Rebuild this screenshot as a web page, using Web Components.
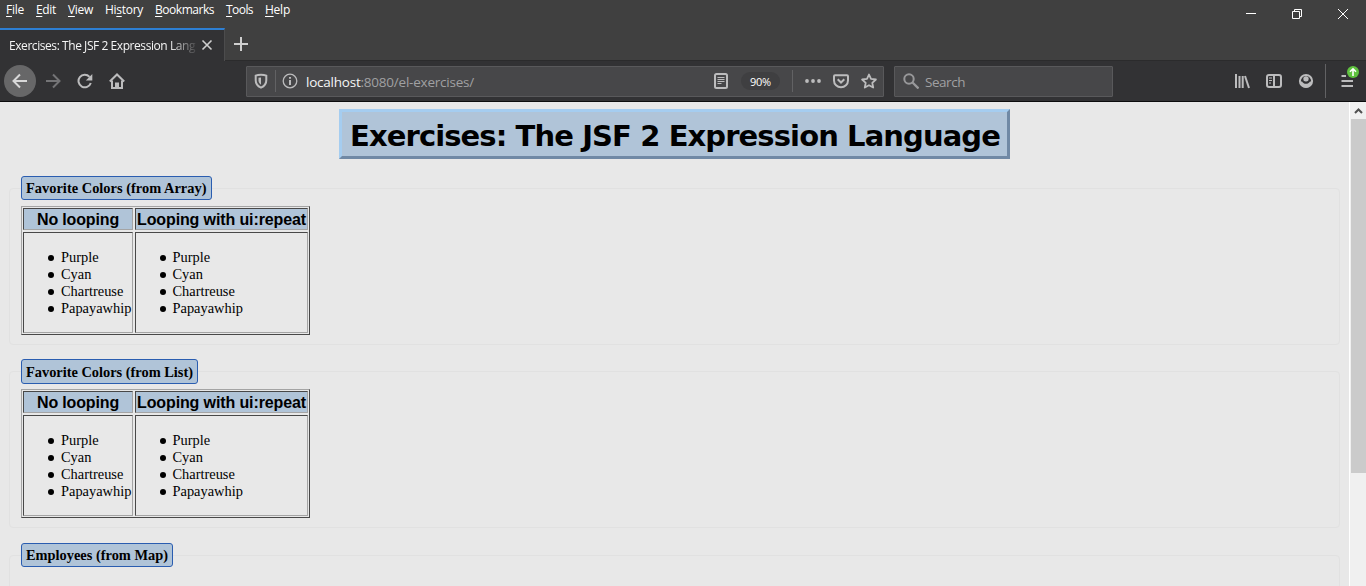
<!DOCTYPE html>
<html lang="en"><head><meta charset="utf-8"><title>Exercises: The JSF 2 Expression Language</title>
<style>html,body{margin:0;height:100%;overflow:hidden;background:#e8e8e8}</style></head>
<body><browser-window></browser-window>
<script>
function define(name, html, setup){
  customElements.define(name, class extends HTMLElement{
    connectedCallback(){
      if(this.shadowRoot) return;
      this.attachShadow({mode:'open'}).innerHTML = html;
      if(setup) setup(this, this.shadowRoot);
    }
  });
}
// Text run whose tracking is adjusted to occupy a given width.
define('fit-text', '<style>:host{display:block;white-space:pre;flex:none}span{display:inline-block}</style><span><slot></slot></span>', (el, r)=>{
  const w = +el.getAttribute('w'), s = r.querySelector('span');
  const d = w - s.getBoundingClientRect().width;
  s.style.letterSpacing = (d / el.textContent.length) + 'px';
  el.style.width = w + 'px';
});
define('menu-bar', `<style>
:host{display:block;height:28px;font:12px/20px "Open Sans","Noto Sans",sans-serif;color:#fff}
nav{display:grid;grid-template-columns:30px 32px 37px 50px 71px 39px 40px;padding-left:6px}
u{text-underline-offset:2px;text-decoration-thickness:1px}
</style><nav><fit-text w="18"><u>F</u>ile</fit-text><fit-text w="20"><u>E</u>dit</fit-text><fit-text w="25"><u>V</u>iew</fit-text><fit-text w="38">Hi<u>s</u>tory</fit-text><fit-text w="59"><u>B</u>ookmarks</fit-text><fit-text w="27"><u>T</u>ools</fit-text><fit-text w="25"><u>H</u>elp</fit-text></nav>`);
define('window-controls', `<style>:host{display:flex;height:28px;justify-content:space-between;width:104px;margin-right:17px}svg{width:12px;height:28px;fill:none;stroke:#fff;stroke-width:1}</style>
<svg viewBox="0 0 12 28"><path d="M1 13.5h10"/></svg><svg viewBox="0 0 12 28"><path d="M1.5 11.5h7v7h-7zM3.5 11v-1.5h7v7H9"/></svg><svg viewBox="0 0 12 28"><path d="M1 9l10 10M11 9L1 19"/></svg>`);
define('tab-strip', `<style>
:host{display:flex;height:33px;box-sizing:border-box;border-bottom:1px solid #2b2b2c}
.tab{width:225px;height:33px;box-sizing:border-box;border-top:2px solid #2d7fd3;border-right:1px solid #4c4c4d;background:#323234;display:flex;align-items:center;padding-left:9px;color:#f5f5f5;font:12px/20px "Open Sans","Noto Sans",sans-serif;padding-bottom:1px}
.t{width:187px;height:20px;margin-top:2px;-webkit-mask-image:linear-gradient(90deg,#000 160px,transparent 190px);mask-image:linear-gradient(90deg,#000 160px,transparent 190px)}
svg{fill:none;stroke:#cfcfcf;stroke-width:1.6}
.x{width:12px;height:12px;margin-left:5px}.p{width:16px;height:16px;margin:8px 0 0 8px;stroke-width:2}
</style><div class="tab"><div class="t"><fit-text w="186">Exercises: The JSF 2 Expression Lang</fit-text></div><svg class="x" viewBox="0 0 12 12"><path d="M1.5 1.5l9 9M10.5 1.5l-9 9"/></svg></div><svg class="p" viewBox="0 0 16 16"><path d="M8 1v14M1 8h14"/></svg>`);
const ICONS = {
 back:'<path d="M15 8H1.500M8 1.500L1.500 8 8 14.500"/>',
 forward:'<path d="M1 8h13.500M8 1.500L14.500 8 8 14.500"/>',
 reload:'<path d="M13.800 10A6.300 6.300 0 1 1 12.500 3.800"/><path d="M15.300 1v6.500H8.800z" fill="currentColor" stroke="none"/>',
 home:'<path d="M.800 8.500L8 1.500l7.200 7"/><path d="M3 7.500V15h10V7.500"/><path d="M7 14.500v-4h2v4"/>',
 shield:'<path d="M8 1.700c2 0 4 .4 5.300 1v4.500c0 3.600-2 6-5.300 7.500-3.300-1.500-5.300-3.900-5.300-7.500V2.700C4 2.100 6 1.700 8 1.700z"/><path d="M8 4.500v7.200C6.300 10.500 5.500 9 5.500 7.200V4.800z" fill="currentColor" stroke="none"/>',
 info:'<circle cx="8" cy="8" r="6.800" stroke-width="1.300"/><path d="M8 7v5M8 4v1.800"/>',
 reader:'<rect x="2" y="1" width="12" height="14" rx="1.500"/><path d="M4.500 4.500h7M4.500 6.500h7M4.500 8.500h7M4.500 10.500h4" stroke-width="1"/>',
 dots:'<g fill="currentColor" stroke="none"><circle cx="2" cy="8" r="1.900"/><circle cx="8" cy="8" r="1.900"/><circle cx="14" cy="8" r="1.900"/></g>',
 pocket:'<path d="M2 2.300h12q1 0 1 1V7.500a7 6.800 0 0 1-14 0V3.300q0-1 1-1z"/><path d="M4.700 6.300L8 9.500l3.300-3.200"/>',
 star:'<path d="M8 1.500l2 4.400 4.900.6-3.600 3.300.9 4.700L8 12.200l-4.200 2.300.9-4.700L1.100 6.500 6 5.900z" stroke-linejoin="round" stroke-width="1.800"/>',
 search:'<circle cx="6" cy="6" r="4.700"/><path d="M9.500 9.500l6 6" stroke-width="2.300"/>',
 library:'<path d="M2 1v14M5.500 3v12M8.700 3v12"/><path d="M11 3l4 12"/>',
 sidebar:'<rect x="1" y="2" width="14" height="12" rx="2"/><path d="M8 2v12"/><path d="M3 5h3M3 7.500h3M3 10h2" stroke-width="1.200"/>',
 account:'<circle cx="8" cy="8" r="6.100"/><path d="M8 3.200a2.700 2.700 0 1 0 .01 0z" fill="currentColor" stroke="none"/><path d="M2 8.500h2c1 1.800 2.300 2.300 4 2.300s3-.5 4-2.300h2c-.5 4-3 6-6 6s-5.500-2-6-6z" fill="currentColor" stroke="none"/>',
 menu:'<path d="M2.500 3h4.500M2.500 8h11.500M2.500 13h11.500"/>'
};
define('tool-icon', '<style>:host{display:block;width:16px;height:16px;flex:none;color:#bcbcbd}svg{display:block;width:100%;height:100%;fill:none;stroke:currentColor;stroke-width:2}</style>', (el,r)=>{
  r.innerHTML += '<svg viewBox="0 0 16 16">'+ICONS[el.getAttribute('name')]+'</svg>';
});
define('nav-bar', `<style>
:host{display:flex;height:41px;box-sizing:border-box;background:#323234;border-bottom:1px solid #0c0c0d;align-items:center;font:13.500px/20px "Open Sans","Noto Sans",sans-serif;color:#a0a0a2}
.back{width:32px;height:32px;border-radius:50%;background:#676768;display:grid;place-items:center;margin-left:4px}
.back tool-icon{color:#d8d8d8}
.box{box-sizing:border-box;height:31px;background:#474749;border:1px solid #59595b;display:flex;align-items:center;border-radius:1px}
.url{width:638px;margin-left:121px;padding-left:6px}.search{width:219px;margin-left:10px;padding-left:8px}
.sep{width:1px;height:22px;background:#626264}
b{font-weight:400;color:#f5f5f6}
.zoom{width:39px;height:18px;border-radius:9px;background:#3f3f41;color:#fff;font-size:11px;line-height:19px;display:flex;justify-content:center}
.menu{position:relative}.badge{position:absolute;left:8px;top:-7px;width:12px;height:12px}
</style>
<div class="back"><tool-icon name="back"></tool-icon></div>
<tool-icon name="forward" style="margin-left:9px;color:#747476"></tool-icon><tool-icon name="reload" style="margin-left:16px"></tool-icon><tool-icon name="home" style="margin-left:16px"></tool-icon>
<div class="box url"><tool-icon name="shield"></tool-icon><i class="sep" style="margin:0 6px"></i><tool-icon name="info"></tool-icon>
<fit-text w="168" style="margin:2px 239px 0 8px"><b>localhost</b>:8080/el-exercises/</fit-text>
<tool-icon name="reader"></tool-icon><div class="zoom" style="margin-left:12px"><fit-text w="21">90%</fit-text></div><i class="sep" style="margin:0 12px"></i><tool-icon name="dots"></tool-icon><tool-icon name="pocket" style="margin-left:12px"></tool-icon><tool-icon name="star" style="margin-left:12px"></tool-icon></div>
<div class="box search"><tool-icon name="search" style="color:#98989a"></tool-icon><fit-text w="40" style="margin:2px 0 0 6px">Search</fit-text></div>
<tool-icon name="library" style="margin-left:121px"></tool-icon><tool-icon name="sidebar" style="margin-left:16px"></tool-icon><tool-icon name="account" style="margin-left:16px"></tool-icon><i class="sep" style="height:34px;margin:0 13px 0 11px"></i>
<div class="menu"><tool-icon name="menu"></tool-icon><svg class="badge" viewBox="0 0 12 12"><circle cx="6" cy="6" r="6" fill="#5fc23f"/><path d="M6 10V3M3 5.800L6 2.800l3 3" fill="none" stroke="#fff" stroke-width="1.600"/></svg></div>`);
define('page-scrollbar', `<style>:host{display:flex;flex-direction:column;width:17px;box-sizing:border-box;background:#f0f0f0;border-left:1px solid #fff;align-items:center}svg{width:9px;height:17px;flex:none}div{width:15px;height:354px;background:#cbcbcb}</style><svg viewBox="0 0 9 17"><path d="M1 11l3.500-3.500L8 11" fill="none" stroke="#505050" stroke-width="2"/></svg><div></div>`);
define('page-title', `<style>:host{display:flex;justify-content:center}h1{margin:0;box-sizing:border-box;width:671px;height:50px;border:3px solid;border-color:#a5cdf0 #7089a5 #7089a5 #a5cdf0;background:#b0c4d8;font:bold 29px/48px "DejaVu Sans",Verdana,sans-serif;color:#000;padding-left:8px}</style><h1></h1>`, (el,r)=>{
  const t=document.createElement('fit-text'); t.setAttribute('w','650'); t.textContent=el.textContent; r.querySelector('h1').append(t);
});
define('color-table', `<style>
:host{display:grid;box-sizing:border-box;width:289px;height:129px;grid-template-columns:110px 173px;grid-template-rows:22px 101px;gap:2px;padding:1px;border:1px solid;border-color:#a4a4a4 #484848 #484848 #a4a4a4;color:#000}
div{border:1px solid;border-color:#484848 #a4a4a4 #a4a4a4 #484848;box-sizing:border-box}
.h{background:#b0c4d8;font:bold 16px/22px "Liberation Sans",Arial,sans-serif;display:flex;justify-content:center}
ul{margin:16px 0 0;padding:0 0 0 24px;list-style:none;font:14.400px/17px "Liberation Serif",serif}li{height:17px;display:flex;align-items:center}
li::before{content:"";width:6px;height:6px;border-radius:50%;background:#000;margin:0 7px 0 0}
.second ul{padding-left:23.500px}
</style><div class="h"><fit-text w="82">No looping</fit-text></div><div class="h"><fit-text w="169">Looping with ui:repeat</fit-text></div>
<div><ul><li>Purple</li><li>Cyan</li><li>Chartreuse</li><li>Papayawhip</li></ul></div><div class="second"><ul><li>Purple</li><li>Cyan</li><li>Chartreuse</li><li>Papayawhip</li></ul></div>`);
define('field-group', `<style>:host{display:block;height:169px;margin:0 9px 14px 9px}
:host([low]) legend{height:25px;line-height:24px;margin-bottom:5px}
:host([last]){margin-top:15px}
fieldset{margin:0;box-sizing:border-box;height:100%;border:1px solid #e1e1e1;border-radius:4px;padding:0 11px}
legend{box-sizing:border-box;height:24px;border:1px solid #2a5db0;border-radius:3px;background:#b0c4d8;font:bold 14.400px/22px "Liberation Serif",serif;color:#000;padding:0 4px;margin-bottom:6px}
</style><fieldset><legend></legend><slot></slot></fieldset>`, (el,r)=>{
  const t=document.createElement('fit-text'), w=+el.getAttribute('w'); t.setAttribute('w',w); t.textContent=el.getAttribute('label');
  const l=r.querySelector('legend'); l.style.width=(w+10)+'px'; l.append(t);
});
define('browser-window', `<style>
:host{display:grid;grid-template-rows:28px 33px 41px 484px;height:586px;width:1366px;background:#404040;overflow:hidden}
header{display:flex;justify-content:space-between}
.view{display:grid;grid-template-columns:1349px 17px;background:#e8e8e8;overflow:hidden}
main{padding-top:7px;overflow:hidden}page-title{margin-bottom:17px}
</style><header><menu-bar></menu-bar><window-controls></window-controls></header><tab-strip></tab-strip><nav-bar></nav-bar>
<div class="view"><main><page-title>Exercises: The JSF 2 Expression Language</page-title>
<field-group label="Favorite Colors (from Array)" w="180.5"><color-table></color-table></field-group>
<field-group low label="Favorite Colors (from List)" w="167"><color-table></color-table></field-group>
<field-group last label="Employees (from Map)" w="142"></field-group></main><page-scrollbar></page-scrollbar></div>`);
</script></body></html>
